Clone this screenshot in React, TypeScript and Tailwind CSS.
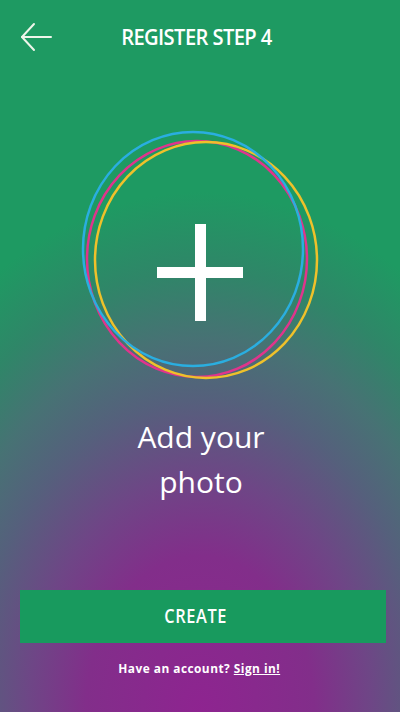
import React from "react";

export default function App() {
  return (
    <div className="relative h-[712px] w-full overflow-hidden bg-[#1e9a62] bg-[radial-gradient(ellipse_380px_520px_at_50%_100%,#8e2490_0%,#822e8a_30%,#6e4686_45%,#55607c_60%,#477274_72%,#2f8668_85%,#1e9a62_100%)] font-['Open_Sans',sans-serif] text-white">
      <header className="grid h-[74px] grid-cols-[60px_1fr_60px] items-center">
        <div className="flex items-center pl-[20px]">
          <svg width="34" height="30" viewBox="0 0 34 30" fill="none">
            <path d="M2 15 H31" stroke="#eef5ea" strokeWidth="2" strokeLinecap="round" />
            <path d="M14 2 L2 15 L14 28" stroke="#eef5ea" strokeWidth="2" strokeLinecap="round" strokeLinejoin="round" />
          </svg>
        </div>
        <h1 className="flex justify-center pr-[8px] text-[21px] font-semibold leading-none tracking-[-0.03em]">
          <span className="inline-block scale-x-[0.96]">REGISTER STEP 4</span>
        </h1>
        <div />
      </header>

      <svg width="400" height="326" viewBox="0 74 400 326" className="block">
        <ellipse cx="197" cy="259" rx="110" ry="118" fill="none" stroke="#e0348c" strokeWidth="2.5" />
        <ellipse cx="206" cy="260" rx="111" ry="118" fill="none" stroke="#efc12a" strokeWidth="2.5" />
        <ellipse cx="193" cy="249" rx="110" ry="117" fill="none" stroke="#2aaee0" strokeWidth="2.5" />
        <rect x="195" y="224" width="11" height="97" fill="#ffffff" />
        <rect x="157" y="267" width="86" height="11" fill="#ffffff" />
      </svg>

      <div className="mt-[14px] pl-[2px] text-center text-[30px] leading-[45px]">
        <div>Add your</div>
        <div>photo</div>
      </div>

      <button className="mt-[86px] ml-[20px] flex h-[53px] w-[366px] items-center justify-center bg-[#189a5e] pr-[14px] text-[19px] font-semibold leading-none tracking-[0.04em] text-white">
        <span className="inline-block scale-x-[0.86]">CREATE</span>
      </button>

      <p className="mt-[18px] flex justify-center pr-[2px] text-[12.5px] font-bold leading-[16px] tracking-[0.04em]">
        <span className="inline-block scale-x-[0.95] whitespace-nowrap">
          Have an account? <span className="underline">Sign in!</span>
        </span>
      </p>
    </div>
  );
}
